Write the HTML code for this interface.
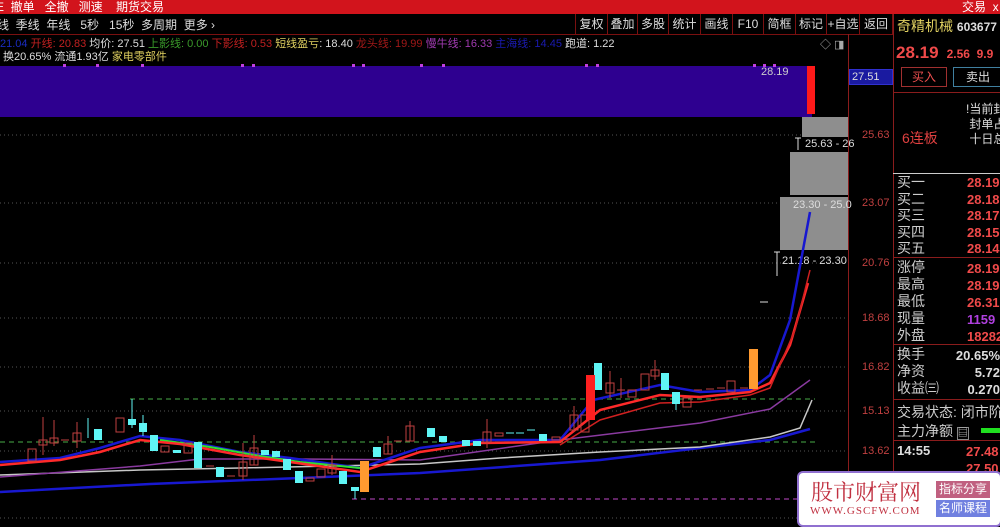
<!DOCTYPE html>
<html><head><meta charset="utf-8"><style>
*{margin:0;padding:0;box-sizing:border-box}
body{width:1000px;height:527px;background:#000;overflow:hidden;position:relative;font-family:"Liberation Sans","Noto Sans CJK SC",sans-serif;color:#ddd}
.a{position:absolute;white-space:nowrap}
.top{position:absolute;left:0;top:0;width:1000px;height:14px;background:#d2141c}
.btn{position:absolute;top:14px;height:20px;border-left:1px solid #7a1010;font-size:12px;color:#ddd;line-height:20px;text-align:center}
.lab{color:#ccc}
.red{color:#f04a4a;font-weight:bold}
</style></head><body>
<div class="top"></div>
<div class="a" style="left:-4px;top:-2px;font-size:12px;color:#fff">E&nbsp; 撤单 &nbsp;&nbsp;全撤 &nbsp;&nbsp;测速 &nbsp;&nbsp;&nbsp;期货交易</div>
<div class="a" style="left:962px;top:-2px;font-size:12px;color:#fff">交易 &nbsp;x</div>
<div class="a" style="left:-3px;top:16px;font-size:12px;color:#ddd">线 &nbsp;季线 &nbsp;年线 &nbsp;&nbsp;5秒 &nbsp;&nbsp;15秒 &nbsp;多周期 &nbsp;更多 ›</div>
<div class="btn" style="left:575px;width:32px">复权</div>
<div class="btn" style="left:607px;width:30px">叠加</div>
<div class="btn" style="left:637px;width:31px">多股</div>
<div class="btn" style="left:668px;width:32px">统计</div>
<div class="btn" style="left:700px;width:32px">画线</div>
<div class="btn" style="left:732px;width:31px">F10</div>
<div class="btn" style="left:763px;width:32px">简框</div>
<div class="btn" style="left:795px;width:31px">标记</div>
<div class="btn" style="left:826px;width:33px">+自选</div>
<div class="btn" style="left:859px;width:34px;border-right:1px solid #7a1010">返回</div>
<div style="position:absolute;left:0;top:34px;width:893px;height:1px;background:#7a1010"></div>
<div class="a" style="left:0;top:35px;font-size:11px"><span style="color:#1a2cc0">21.04</span> <span style="color:#c02020">开线: 20.83</span> <span style="color:#ddd">均价: 27.51</span> <span style="color:#3a9a2a">上影线: 0.00</span> <span style="color:#c02020">下影线: 0.53</span> <span style="color:#e0d060">短线盈亏</span><span style="color:#ddd">: 18.40</span> <span style="color:#a01818">龙头线: 19.99</span> <span style="color:#a03ab0">慢牛线: 16.33</span> <span style="color:#1a1ab0">主海线: 14.45</span> <span style="color:#ddd">跑道: 1.22</span></div>
<div class="a" style="left:3px;top:48px;font-size:11px;color:#ddd">换20.65% 流通1.93亿 <span style="color:#e0d060">家电零部件</span></div>
<div class="a" style="left:820px;top:36px;font-size:11px;color:#aaa">◇ ◨</div>
<div style="position:absolute;left:848px;top:34px;width:1px;height:493px;background:#8a1c1c"></div>
<div style="position:absolute;left:893px;top:14px;width:1px;height:513px;background:#8a1c1c"></div>
<svg class="a" style="left:0;top:0" width="893" height="527">
<g stroke="#555" stroke-dasharray="1 3" stroke-width="1">
<line x1="0" y1="135" x2="848" y2="135"/><line x1="0" y1="203" x2="848" y2="203"/><line x1="0" y1="263" x2="848" y2="263"/><line x1="0" y1="318" x2="848" y2="318"/><line x1="0" y1="367" x2="848" y2="367"/><line x1="0" y1="411" x2="848" y2="411"/><line x1="0" y1="451" x2="848" y2="451"/><line x1="0" y1="518" x2="848" y2="518"/></g>
<g stroke-dasharray="5 4" stroke-width="1.3"><line x1="130" y1="399" x2="815" y2="399" stroke="#3a8a3a"/><line x1="0" y1="442" x2="815" y2="442" stroke="#3a8a3a"/><line x1="352" y1="499" x2="815" y2="499" stroke="#9a3aa0"/></g>
<rect x="0" y="66" width="812" height="51" fill="#2e0090"/>
<g fill="#c040e0"><rect x="63" y="64" width="3" height="3"/><rect x="96" y="64" width="3" height="3"/><rect x="141" y="64" width="3" height="3"/><rect x="241" y="64" width="3" height="3"/><rect x="252" y="64" width="3" height="3"/><rect x="352" y="64" width="3" height="3"/><rect x="362" y="64" width="3" height="3"/><rect x="420" y="64" width="3" height="3"/><rect x="442" y="64" width="3" height="3"/><rect x="585" y="64" width="3" height="3"/><rect x="596" y="64" width="3" height="3"/><rect x="753" y="64" width="3" height="3"/><rect x="763" y="64" width="3" height="3"/><rect x="773" y="64" width="3" height="3"/></g>
<rect x="807" y="66" width="8" height="48" fill="#ff1a1a"/>
<text x="761" y="75" font-size="11" fill="#ccc">28.19</text>
<rect x="802" y="117" width="46" height="20" fill="#8e8e8e"/>
<rect x="790" y="152" width="58" height="43" fill="#8e8e8e"/>
<rect x="780" y="197" width="68" height="53" fill="#8e8e8e"/>
<g stroke="#ddd"><line x1="798" y1="138" x2="798" y2="150"/><line x1="795" y1="138" x2="801" y2="138"/><line x1="777" y1="252" x2="777" y2="276"/><line x1="774" y1="252" x2="780" y2="252"/><line x1="760" y1="302" x2="768" y2="302"/></g>
<text x="805" y="147" font-size="11" fill="#ddd">25.63 - 26</text>
<text x="793" y="208" font-size="11" fill="#ddd">23.30 - 25.0</text>
<text x="782" y="264" font-size="11" fill="#ddd">21.18 - 23.30</text>
<g fill="none" stroke-width="2.5">
<polyline stroke="#1818d0" points="0,492 150,484 300,478 420,473 600,460 700,448 770,440 810,429"/>
<polyline stroke="#c8c8c8" stroke-width="1.5" points="0,475 140,470 240,468 420,464 500,458 600,452 700,447 770,437 800,428 812,400"/>
<polyline stroke="#8a3aa0" stroke-width="1.5" points="0,477 140,466 200,459 300,459 420,460 560,440 700,423 770,409 810,380"/>
<polyline stroke="#1818d0" points="0,462 60,458 100,448 140,436 180,440 240,452 290,458 360,468 420,448 480,440 560,440 593,400 660,385 700,392 750,390 770,375 790,320 810,212"/>
<polyline stroke="#30e030" stroke-width="2" points="160,440 210,447 260,456 300,462 360,468"/>
<polyline stroke="#ff2a2a" points="0,465 60,460 100,452 140,440 180,444 240,455 290,462 360,472 420,452 480,443 560,442 600,410 660,395 700,397 750,392 770,383 790,345 808,283"/>
<polyline stroke="#d02020" stroke-width="1.5" points="560,445 600,420 660,403 700,402 750,395 770,388 795,330 810,270"/>
</g>
<g stroke="#c04040" fill="none" stroke-width="1">
<line x1="43" y1="417" x2="43" y2="455"/><line x1="54" y1="420" x2="54" y2="446"/><line x1="77" y1="422" x2="77" y2="448"/><line x1="243" y1="443" x2="243" y2="480"/><line x1="254" y1="435" x2="254" y2="465"/><line x1="332" y1="455" x2="332" y2="475"/><line x1="388" y1="436" x2="388" y2="454"/><line x1="410" y1="421" x2="410" y2="441"/><line x1="487" y1="419" x2="487" y2="448"/><line x1="574" y1="406" x2="574" y2="432"/><line x1="610" y1="371" x2="610" y2="398"/><line x1="655" y1="360" x2="655" y2="380"/>
<rect x="28" y="449" width="8" height="12"/><rect x="39" y="440" width="8" height="5"/><rect x="50" y="438" width="8" height="5"/><rect x="73" y="433" width="8" height="8"/><rect x="116" y="418" width="8" height="14"/><rect x="161" y="446" width="8" height="6"/><rect x="184" y="443" width="8" height="10"/><rect x="239" y="462" width="8" height="14"/><rect x="250" y="448" width="8" height="17"/><rect x="306" y="478" width="8" height="3"/><rect x="317" y="469" width="8" height="8"/><rect x="328" y="465" width="8" height="8"/><rect x="384" y="444" width="8" height="10"/><rect x="406" y="426" width="8" height="15"/><rect x="483" y="432" width="8" height="10"/><rect x="495" y="433" width="8" height="3"/><rect x="552" y="437" width="8" height="3"/><rect x="570" y="415" width="8" height="15"/><rect x="581" y="415" width="8" height="17"/><rect x="606" y="383" width="8" height="10"/><rect x="628" y="390" width="8" height="7"/><rect x="641" y="374" width="8" height="16"/><rect x="651" y="370" width="8" height="6"/><rect x="683" y="398" width="8" height="9"/><rect x="727" y="381" width="8" height="11"/>
<line x1="61" y1="440" x2="69" y2="440"/><line x1="206" y1="466" x2="214" y2="466"/><line x1="227" y1="476" x2="235" y2="476"/><line x1="394" y1="441" x2="402" y2="441"/><line x1="617" y1="390" x2="625" y2="390"/><line x1="621" y1="378" x2="621" y2="398"/><line x1="694" y1="390" x2="702" y2="390"/><line x1="706" y1="389" x2="714" y2="389"/><line x1="717" y1="388" x2="725" y2="388"/><line x1="740" y1="388" x2="748" y2="388"/>
</g>
<g stroke="#5ff5f5" stroke-width="1"><line x1="132" y1="399" x2="132" y2="428"/><line x1="143" y1="415" x2="143" y2="436"/><line x1="88" y1="418" x2="88" y2="438"/><line x1="355" y1="487" x2="355" y2="499"/><line x1="676" y1="392" x2="676" y2="410"/><line x1="506" y1="433" x2="514" y2="433"/><line x1="516" y1="433" x2="524" y2="433"/><line x1="527" y1="430" x2="535" y2="430"/></g>
<g fill="#5ff5f5"><rect x="94" y="429" width="8" height="11"/><rect x="128" y="419" width="8" height="6"/><rect x="139" y="423" width="8" height="9"/><rect x="150" y="435" width="8" height="16"/><rect x="173" y="450" width="8" height="3"/><rect x="194" y="442" width="8" height="26"/><rect x="216" y="467" width="8" height="10"/><rect x="261" y="450" width="8" height="5"/><rect x="272" y="451" width="8" height="6"/><rect x="283" y="459" width="8" height="11"/><rect x="295" y="471" width="8" height="12"/><rect x="339" y="471" width="8" height="13"/><rect x="351" y="487" width="8" height="4"/><rect x="373" y="447" width="8" height="10"/><rect x="427" y="428" width="8" height="9"/><rect x="439" y="436" width="8" height="6"/><rect x="462" y="440" width="8" height="6"/><rect x="473" y="441" width="8" height="5"/><rect x="539" y="434" width="8" height="7"/><rect x="594" y="363" width="8" height="27"/><rect x="661" y="373" width="8" height="17"/><rect x="672" y="392" width="8" height="12"/></g>
<rect x="586" y="375" width="9" height="45" fill="#ff2020"/>
<rect x="360" y="461" width="9" height="31" fill="#ff9a30"/>
<rect x="749" y="349" width="9" height="40" fill="#ff9a30"/>
</svg>
<div class="a" style="left:849px;top:69px;width:44px;height:16px;background:#1a1aa0;border:1px solid #3030d0;color:#ddd;font-size:11px;line-height:14px;padding-left:2px">27.51</div>
<div class="a" style="left:862px;top:129px;font-size:11px;color:#c04040">25.63</div>
<div class="a" style="left:862px;top:197px;font-size:11px;color:#c04040">23.07</div>
<div class="a" style="left:862px;top:257px;font-size:11px;color:#c04040">20.76</div>
<div class="a" style="left:862px;top:312px;font-size:11px;color:#c04040">18.68</div>
<div class="a" style="left:862px;top:361px;font-size:11px;color:#c04040">16.82</div>
<div class="a" style="left:862px;top:405px;font-size:11px;color:#c04040">15.13</div>
<div class="a" style="left:862px;top:445px;font-size:11px;color:#c04040">13.62</div>
<div class="a" style="left:897px;top:16px;font-size:14px;color:#e0d060">奇精机械 <span style="color:#ddd;font-size:12px;font-weight:bold">603677</span></div>
<div class="a" style="left:896px;top:43px;font-size:17px;color:#f04a4a;font-weight:bold">28.19 <span style="font-size:12px">&nbsp;2.56 &nbsp;9.9</span></div>
<div class="a" style="left:901px;top:67px;width:46px;height:20px;border:1px solid #a03030;color:#f05050;font-size:12px;text-align:center;line-height:18px">买入</div>
<div class="a" style="left:953px;top:67px;width:50px;height:20px;border:1px solid #4080a0;color:#ddd;font-size:12px;text-align:center;line-height:18px">卖出</div>
<div class="a" style="left:893px;top:92px;width:107px;height:1px;background:#8a1c1c"></div>
<div class="a" style="left:902px;top:128px;font-size:14px;color:#e04040">6连板</div>
<div class="a" style="left:966px;top:102px;font-size:12px;color:#ddd;line-height:15px">!当前封<br>&nbsp;封单占<br>&nbsp;十日总</div>
<div class="a" style="left:893px;top:173px;width:107px;height:1px;background:#ccc"></div>
<div class="a lab" style="left:897px;top:174px;font-size:14px;line-height:16.5px">买一<br>买二<br>买三<br>买四<br>买五</div>
<div class="a red" style="left:967px;top:175px;font-size:13px;line-height:16.5px">28.19<br>28.18<br>28.17<br>28.15<br>28.14</div>
<div class="a" style="left:893px;top:257px;width:107px;height:1px;background:#8a1c1c"></div>
<div class="a lab" style="left:897px;top:259px;font-size:14px;line-height:17px">涨停<br>最高<br>最低<br>现量<br>外盘</div>
<div class="a red" style="left:967px;top:260px;font-size:13px;line-height:17px">28.19<br>28.19<br>26.31<br><span style="color:#b040e0">1159</span><br>182822</div>
<div class="a" style="left:893px;top:344px;width:107px;height:1px;background:#8a1c1c"></div>
<div class="a lab" style="left:897px;top:346px;font-size:14px;line-height:17px">换手<br>净资<br>收益㈢</div>
<div class="a" style="left:955px;top:347px;font-size:13px;line-height:17px;color:#ddd;font-weight:bold;text-align:right;width:45px">20.65%<br>5.72<br>0.270</div>
<div class="a" style="left:893px;top:399px;width:107px;height:1px;background:#8a1c1c"></div>
<div class="a lab" style="left:897px;top:402px;font-size:14px">交易状态: 闭市阶</div>
<div class="a lab" style="left:897px;top:421px;font-size:14px">主力净额 <span style="font-size:10px;border:1px solid #888">▤</span></div>
<div class="a" style="left:981px;top:428px;width:19px;height:5px;background:#20e020"></div>
<div class="a" style="left:893px;top:440px;width:107px;height:1px;background:#8a1c1c"></div>
<div class="a" style="left:897px;top:443px;font-size:13px;color:#ddd;font-weight:bold">14:55</div>
<div class="a red" style="left:966px;top:443px;font-size:13px;line-height:17px">27.48<br>27.50</div>
<div class="a" style="left:797px;top:471px;width:205px;height:56px;background:#fff;border:2px solid #9070d0;border-radius:6px"></div>
<div class="a" style="left:811px;top:476px;font-size:22px;color:#c03040;font-family:'Noto Serif CJK SC',serif">股市财富网</div>
<div class="a" style="left:810px;top:505px;font-size:11px;color:#c03040;font-family:'Liberation Serif',serif;letter-spacing:1px">WWW.GSCFW.COM</div>
<div class="a" style="left:936px;top:481px;width:54px;height:17px;background:#c06080;color:#fff;font-size:12px;text-align:center;line-height:17px">指标分享</div>
<div class="a" style="left:936px;top:500px;width:54px;height:17px;background:#7080e0;color:#fff;font-size:12px;text-align:center;line-height:17px">名师课程</div>
</body></html>
